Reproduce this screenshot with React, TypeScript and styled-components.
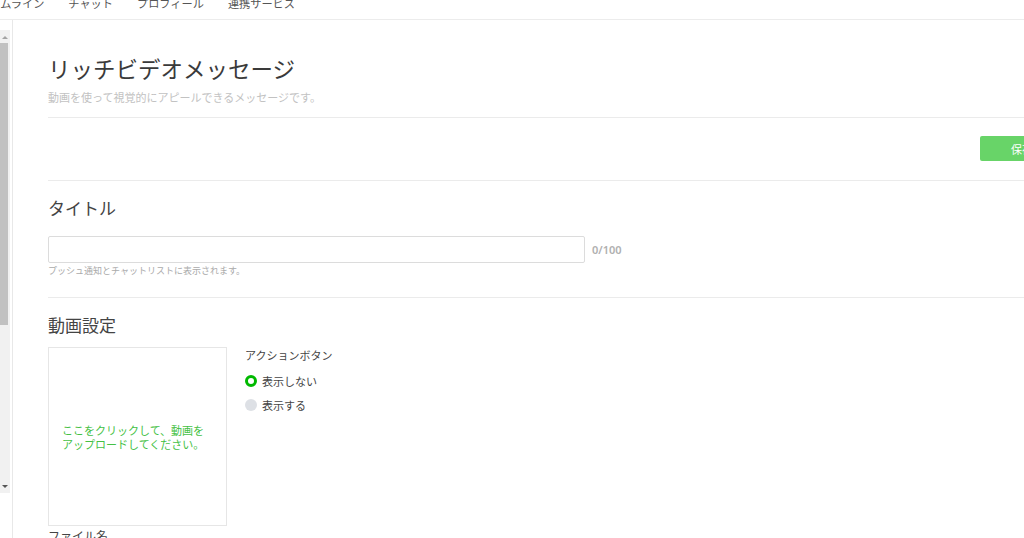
import React from "react";
import styled, { createGlobalStyle } from "styled-components";

const Global = createGlobalStyle`
  html, body { margin: 0; padding: 0; overflow: hidden; background: #fff; }
  body { font-family: "Noto Sans CJK JP", "Noto Sans", sans-serif; color: #333; }
  * { box-sizing: border-box; }
`;

const Page = styled.div`
  width: 1064px;
  height: 538px;
  display: flex;
  flex-direction: column;
`;

const TopNav = styled.nav`
  height: 20px;
  border-bottom: 1px solid #ececec;
  display: flex;
  gap: 24px;
  margin-left: -22px;
  overflow: hidden;
`;

const NavItem = styled.span`
  font-size: 11.2px;
  line-height: 12px;
  margin-top: -3px;
  color: #555;
  white-space: nowrap;
`;

const Body = styled.div`
  flex: 1;
  display: flex;
  min-height: 0;
`;

const Sidebar = styled.aside`
  width: 13px;
  border-right: 1px solid #e8e8e8;
  padding-top: 10px;
  flex-shrink: 0;
`;

const Track = styled.div`
  width: 10px;
  height: 463px;
  background: #f1f1f1;
  display: flex;
  flex-direction: column;
  align-items: center;
`;

const Arrow = styled.div<{ $down?: boolean }>`
  width: 0;
  height: 0;
  border-left: 3px solid transparent;
  border-right: 3px solid transparent;
  ${(p) =>
    p.$down
      ? "border-top: 3px solid #555; margin-top: auto; margin-bottom: 5px;"
      : "border-bottom: 3px solid #a3a3a3; margin-top: 6px;"}
`;

const Thumb = styled.div`
  width: 8px;
  height: 282px;
  margin-top: 4px;
  background: #c1c1c1;
  align-self: flex-start;
`;

const Content = styled.main`
  flex: 1;
  padding: 33px 0 0 35px;
  display: flex;
  flex-direction: column;
`;

const PageTitle = styled.h1`
  margin: 0;
  font-size: 22.5px;
  line-height: 30px;
  font-weight: 400;
  color: #3a3a3a;
`;

const Sub = styled.p`
  margin: 6px 0 0;
  font-size: 11px;
  line-height: 16px;
  color: #c2c2c2;
`;

const Rule = styled.hr<{ $top: number }>`
  margin: ${(p) => p.$top}px 0 0;
  border: 0;
  border-top: 1px solid #ebebeb;
  height: 0;
`;

const ActionRow = styled.div`
  display: flex;
  justify-content: flex-end;
  margin-top: 18px;
`;

const SaveButton = styled.button`
  width: 84px;
  height: 25px;
  border: 0;
  border-radius: 2px;
  background: #68d468;
  color: #fff;
  font-family: inherit;
  font-size: 11px;
  text-align: left;
  padding: 0 0 0 31px;
`;

const SectionTitle = styled.h2`
  margin: 15px 0 0;
  font-size: 17px;
  line-height: 24px;
  font-weight: 400;
  color: #444;
`;

const InputRow = styled.div`
  display: flex;
  align-items: center;
  gap: 7px;
  margin-top: 16px;
`;

const TextInput = styled.input`
  width: 537px;
  height: 27px;
  border: 1px solid #dcdcdc;
  border-radius: 2px;
  outline: none;
`;

const Counter = styled.span`
  font-family: "Noto Sans", sans-serif;
  font-size: 11px;
  font-weight: 600;
  color: #b0b0b0;
`;

const Hint = styled.p`
  margin: 2px 0 0;
  font-size: 9px;
  line-height: 12px;
  color: #aaa;
`;

const VideoRow = styled.div`
  display: flex;
  gap: 18px;
  margin-top: 10px;
`;

const UploadBox = styled.div`
  width: 179px;
  height: 179px;
  border: 1px solid #e6e6e6;
  display: flex;
  align-items: center;
  padding: 0 13px;
  color: #45c145;
  font-size: 11px;
  line-height: 14px;
  cursor: pointer;
`;

const Options = styled.div`
  display: flex;
  flex-direction: column;
`;

const Label = styled.div`
  font-size: 11px;
  line-height: 16px;
  color: #444;
`;

const RadioList = styled.div`
  display: flex;
  flex-direction: column;
  gap: 8px;
  margin-top: 10px;
`;

const RadioItem = styled.label`
  display: flex;
  align-items: center;
  gap: 5px;
  font-size: 11px;
  line-height: 16px;
  color: #444;
`;

const RadioDot = styled.span<{ $on?: boolean }>`
  width: 12px;
  height: 12px;
  border-radius: 50%;
  ${(p) =>
    p.$on
      ? "border: 3px solid #00b900; background: #fff;"
      : "background: #dde0e5;"}
`;

const FileLabel = styled.div`
  margin-top: 2px;
  font-size: 12px;
  line-height: 16px;
  color: #444;
`;

export default function App() {
  return (
    <>
      <Global />
      <Page>
        <TopNav>
          <NavItem>タイムライン</NavItem>
          <NavItem>チャット</NavItem>
          <NavItem>プロフィール</NavItem>
          <NavItem>連携サービス</NavItem>
        </TopNav>
        <Body>
          <Sidebar>
            <Track>
              <Arrow />
              <Thumb />
              <Arrow $down />
            </Track>
          </Sidebar>
          <Content>
            <PageTitle>リッチビデオメッセージ</PageTitle>
            <Sub>動画を使って視覚的にアピールできるメッセージです。</Sub>
            <Rule $top={12} />
            <ActionRow>
              <SaveButton>保存</SaveButton>
            </ActionRow>
            <Rule $top={19} />
            <SectionTitle>タイトル</SectionTitle>
            <InputRow>
              <TextInput />
              <Counter>0/100</Counter>
            </InputRow>
            <Hint>プッシュ通知とチャットリストに表示されます。</Hint>
            <Rule $top={20} />
            <SectionTitle>動画設定</SectionTitle>
            <VideoRow>
              <UploadBox>ここをクリックして、動画をアップロードしてください。</UploadBox>
              <Options>
                <Label>アクションボタン</Label>
                <RadioList>
                  <RadioItem>
                    <RadioDot $on />
                    表示しない
                  </RadioItem>
                  <RadioItem>
                    <RadioDot />
                    表示する
                  </RadioItem>
                </RadioList>
              </Options>
            </VideoRow>
            <FileLabel>ファイル名</FileLabel>
          </Content>
        </Body>
      </Page>
    </>
  );
}
